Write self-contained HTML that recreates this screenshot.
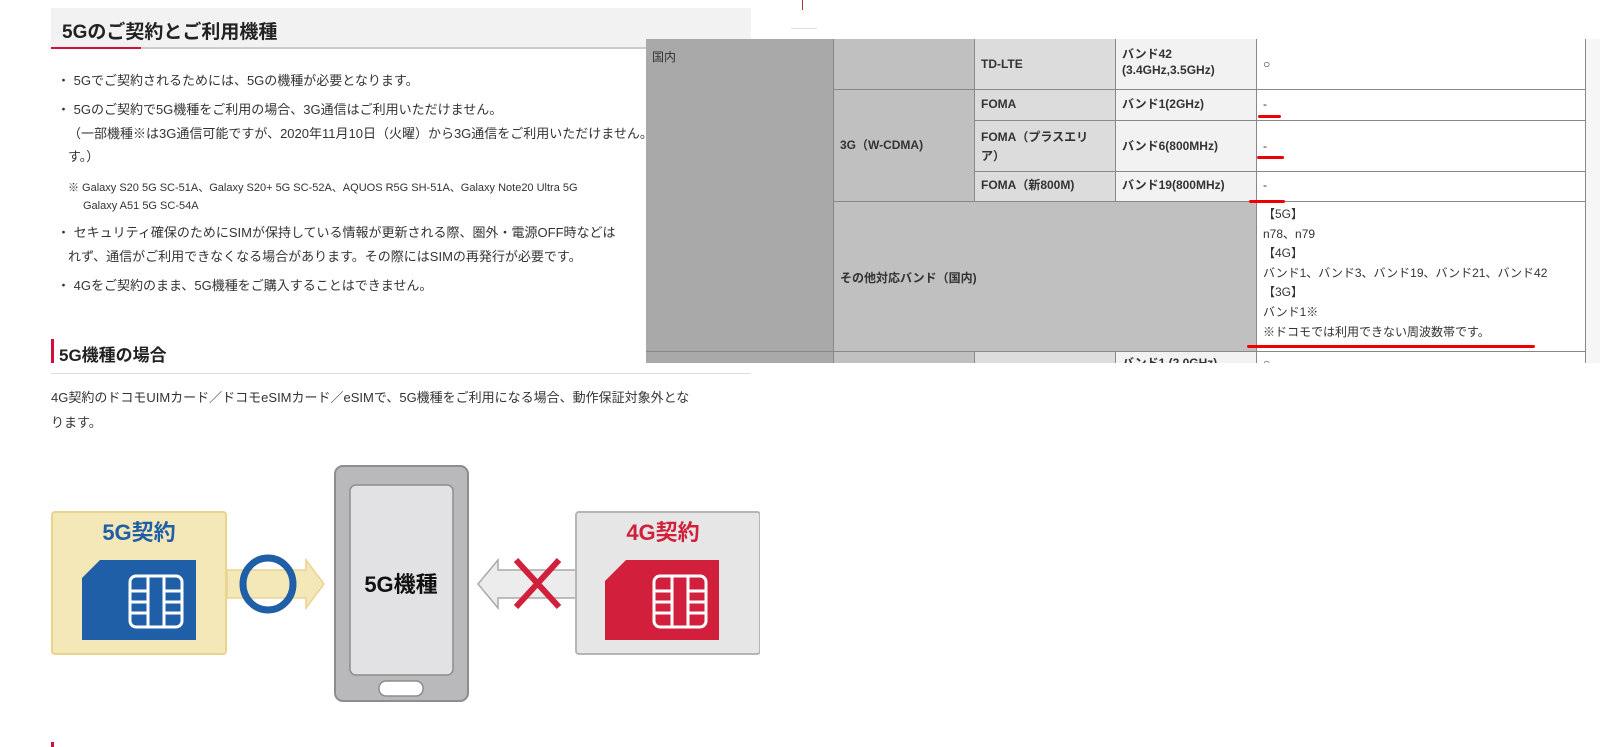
<!DOCTYPE html>
<html><head><meta charset="utf-8"><style>
*{margin:0;padding:0;box-sizing:border-box}
body{width:1600px;height:747px;background:#fff;position:relative;overflow:hidden;font-family:"Liberation Sans","Noto Sans CJK JP",sans-serif;color:#333}
.a{position:absolute;white-space:nowrap}
.t{font-size:13px;line-height:16px}
.c{position:absolute;border-right:1px solid #888;border-bottom:1px solid #888;font-size:12px;line-height:16px;padding:4px 6px;color:#333}
.b{font-weight:bold}
.r{position:absolute;background:#e00;border-radius:3px;height:3px}
</style></head><body>
<div class="a" style="left:51px;top:8px;width:700px;height:40px;background:#f2f2f2"></div>
<div class="a b" style="left:62px;top:17px;font-size:19px;color:#222">5Gのご契約とご利用機種</div>
<div class="a" style="left:51px;top:47px;width:700px;height:2px;background:#ccc"></div>
<div class="a" style="left:51px;top:47px;width:90px;height:2px;background:#d0103a"></div>

<div class="a t" style="left:57px;top:73px">・ 5Gでご契約されるためには、5Gの機種が必要となります。</div>
<div class="a t" style="left:57px;top:102px">・ 5Gのご契約で5G機種をご利用の場合、3G通信はご利用いただけません。</div>
<div class="a t" style="left:68px;top:126px">（一部機種※は3G通信可能ですが、2020年11月10日（火曜）から3G通信をご利用いただけません。</div>
<div class="a t" style="left:68px;top:149px">す。）</div>
<div class="a" style="left:68px;top:179px;font-size:11px">※ Galaxy S20 5G SC-51A、Galaxy S20+ 5G SC-52A、AQUOS R5G SH-51A、Galaxy Note20 Ultra 5G</div>
<div class="a" style="left:83px;top:200px;font-size:11px">Galaxy A51 5G SC-54A</div>
<div class="a t" style="left:57px;top:225px">・ セキュリティ確保のためにSIMが保持している情報が更新される際、圏外・電源OFF時などは</div>
<div class="a t" style="left:68px;top:249px">れず、通信がご利用できなくなる場合があります。その際にはSIMの再発行が必要です。</div>
<div class="a t" style="left:57px;top:278px">・ 4Gをご契約のまま、5G機種をご購入することはできません。</div>

<div class="a" style="left:51px;top:339px;width:3px;height:24px;background:#d0103a"></div>
<div class="a b" style="left:59px;top:341px;font-size:17px;color:#222">5G機種の場合</div>
<div class="a" style="left:51px;top:373px;width:700px;height:1px;background:#ddd"></div>
<div class="a t" style="left:51px;top:390px">4G契約のドコモUIMカード／ドコモeSIMカード／eSIMで、5G機種をご利用になる場合、動作保証対象外とな</div>
<div class="a t" style="left:51px;top:415px">ります。</div>

<svg class="a" style="left:0;top:440px" width="760" height="307">
<rect x="52" y="72" width="174" height="142" rx="3" fill="#f4e7b8" stroke="#e9d48f" stroke-width="2"/>
<text x="139" y="100" text-anchor="middle" font-size="22" font-weight="bold" fill="#1f5fa8" font-family="Liberation Sans,Noto Sans CJK JP,sans-serif">5G契約</text>
<path d="M100 120 L196 120 L196 200 L82 200 L82 138 Z" fill="#1f5fa8"/>
<rect x="130" y="136" width="52" height="51" rx="6" fill="none" stroke="#fff" stroke-width="3"/>
<path d="M148 136V187M164 136V187M130 151H148M130 162H148M130 173H148M164 151H182M164 162H182M164 173H182" stroke="#fff" stroke-width="3"/>
<path d="M227 130H306V120L324 144L306 168V158H227Z" fill="#f4e7b8" stroke="#e9d48f" stroke-width="1.5"/>
<ellipse cx="268" cy="144" rx="25" ry="26" fill="none" stroke="#1f5fa8" stroke-width="7"/>
<rect x="335" y="26" width="133" height="235" rx="8" fill="#b9b9bc" stroke="#8d8d8f" stroke-width="2"/>
<rect x="350" y="45" width="103" height="190" rx="6" fill="#e2e2e4" stroke="#8d8d8f" stroke-width="1.5"/>
<rect x="379" y="241" width="44" height="15" rx="7" fill="#fff" stroke="#8d8d8f" stroke-width="1.5"/>
<text x="401" y="152" text-anchor="middle" font-size="22" font-weight="bold" fill="#111" font-family="Liberation Sans,Noto Sans CJK JP,sans-serif">5G機種</text>
<path d="M577 130H498V120L478 144L498 168V158H577Z" fill="#ececec" stroke="#aaa" stroke-width="1.5"/>
<path d="M516 120L559 167M559 120L516 167" stroke="#d2203c" stroke-width="6"/>
<rect x="576" y="72" width="184" height="142" rx="3" fill="#e6e6e6" stroke="#b5b5b5" stroke-width="2"/>
<text x="663" y="100" text-anchor="middle" font-size="22" font-weight="bold" fill="#d2203c" font-family="Liberation Sans,Noto Sans CJK JP,sans-serif">4G契約</text>
<path d="M626 120L719 120L719 200L605 200L605 141Z" fill="#d2203c"/>
<rect x="654" y="136" width="52" height="51" rx="6" fill="none" stroke="#fff" stroke-width="3"/>
<path d="M672 136V187M688 136V187M654 151H672M654 162H672M654 173H672M688 151H706M688 162H706M688 173H706" stroke="#fff" stroke-width="3"/>
<rect x="51" y="302" width="3" height="10" fill="#d0103a"/>
</svg>

<div class="a" style="left:802px;top:0;width:1px;height:10px;background:#a33"></div>
<div class="a" style="left:791px;top:28px;width:26px;height:1px;background:#ddd"></div>

<div class="a" style="left:646px;top:39px;width:954px;height:331px;background:#fff"></div>
<div class="a" style="left:1586px;top:39px;width:14px;height:331px;background:#f6f6f6"></div>
<div class="c" style="left:646px;top:39px;width:188px;height:313px;background:#a9a9a9;padding:10px 6px">国内</div>
<div class="c" style="left:646px;top:352px;width:188px;height:20px;background:#a9a9a9"></div>
<div class="c" style="left:834px;top:39px;width:141px;height:51px;background:#c0c0c0"></div>
<div class="c b" style="left:975px;top:39px;width:141px;height:51px;background:#dcdcdc;padding-top:17px">TD-LTE</div>
<div class="c b" style="left:1116px;top:39px;width:141px;height:51px;background:#f2f2f2;padding-top:7px">バンド42<br>(3.4GHz,3.5GHz)</div>
<div class="c" style="left:1257px;top:39px;width:329px;height:51px;padding-top:17px">○</div>
<div class="c b" style="left:834px;top:90px;width:141px;height:112px;background:#c0c0c0;padding-top:47px">3G（W-CDMA)</div>
<div class="c b" style="left:975px;top:90px;width:141px;height:31px;background:#dcdcdc;padding-top:6px">FOMA</div>
<div class="c b" style="left:1116px;top:90px;width:141px;height:31px;background:#f2f2f2;padding-top:6px">バンド1(2GHz)</div>
<div class="c" style="left:1257px;top:90px;width:329px;height:31px;padding-top:6px">-</div>
<div class="c b" style="left:975px;top:121px;width:141px;height:51px;background:#dcdcdc;padding-top:7px;line-height:19px">FOMA（プラスエリ<br>ア）</div>
<div class="c b" style="left:1116px;top:121px;width:141px;height:51px;background:#f2f2f2;padding-top:17px">バンド6(800MHz)</div>
<div class="c" style="left:1257px;top:121px;width:329px;height:51px;padding-top:17px">-</div>
<div class="c b" style="left:975px;top:172px;width:141px;height:30px;background:#dcdcdc;padding-top:5px">FOMA（新800M)</div>
<div class="c b" style="left:1116px;top:172px;width:141px;height:30px;background:#f2f2f2;padding-top:5px">バンド19(800MHz)</div>
<div class="c" style="left:1257px;top:172px;width:329px;height:30px;padding-top:5px">-</div>
<div class="c b" style="left:834px;top:202px;width:423px;height:150px;background:#c0c0c0;padding-top:68px">その他対応バンド（国内)</div>
<div class="c" style="left:1257px;top:202px;width:329px;height:150px;padding-top:3px;line-height:19.6px">【5G】<br>n78、n79<br>【4G】<br>バンド1、バンド3、バンド19、バンド21、バンド42<br>【3G】<br>バンド1※<br>※ドコモでは利用できない周波数帯です。</div>
<div class="c" style="left:834px;top:352px;width:141px;height:20px;background:#c0c0c0"></div>
<div class="c" style="left:975px;top:352px;width:141px;height:20px;background:#dcdcdc"></div>
<div class="c b" style="left:1116px;top:352px;width:141px;height:20px;background:#f2f2f2;padding-top:3px">バンド1 (2.0GHz)</div>
<div class="c" style="left:1257px;top:352px;width:329px;height:20px;padding-top:3px">○</div>
<div class="a" style="left:0;top:363px;width:1600px;height:10px;background:#fff"></div>
<div class="a" style="left:51px;top:373px;width:700px;height:1px;background:#ddd"></div>

<div class="r" style="left:1258px;top:115px;width:23px"></div>
<div class="r" style="left:1257px;top:156px;width:27px"></div>
<div class="r" style="left:1249px;top:200px;width:36px"></div>
<div class="r" style="left:1247px;top:345px;width:288px"></div>
</body></html>
